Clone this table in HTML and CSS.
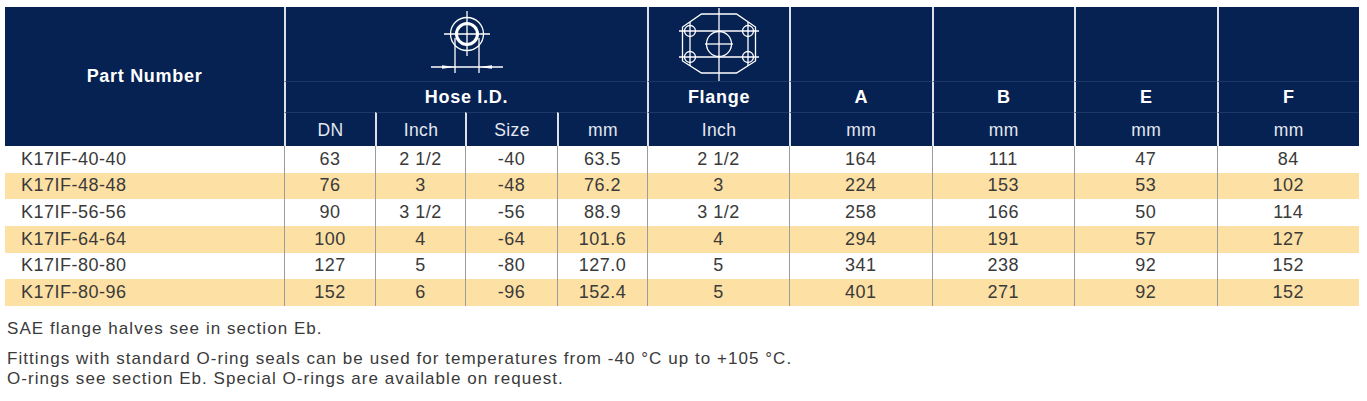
FILE: index.html
```html
<!DOCTYPE html>
<html lang="en">
<head>
<meta charset="utf-8">
<title>K17IF</title>
<link rel="stylesheet" href="styles.css">
</head>
<body>
<table class="spec">
  <colgroup>
    <col class="c-part"><col class="c-dn"><col class="c-inch"><col class="c-size"><col class="c-mm">
    <col class="c-flange"><col class="c-dim"><col class="c-dim"><col class="c-dim"><col class="c-dim">
  </colgroup>
  <thead>
    <tr class="h-icons">
      <th rowspan="3" class="part">Part Number</th>
      <th colspan="4" class="icon">
        <svg class="ico" width="80" height="74" viewBox="0 0 80 74" aria-hidden="true">
          <g fill="none" stroke="#fff" stroke-width="1.3">
            <circle cx="40" cy="27" r="16.5"/>
            <circle cx="40" cy="27" r="10.5" stroke-width="3"/>
            <line x1="17" y1="27" x2="63" y2="27"/>
            <line x1="40" y1="4" x2="40" y2="49"/>
            <line x1="28" y1="31" x2="28" y2="66"/>
            <line x1="52" y1="31" x2="52" y2="66"/>
            <line x1="4" y1="60" x2="76" y2="60"/>
          </g>
          <g fill="#fff">
            <polygon points="15,58.3 28,60 15,61.7"/>
            <polygon points="65,58.3 52,60 65,61.7"/>
          </g>
        </svg>
      </th>
      <th class="icon">
        <svg class="ico" width="80" height="74" viewBox="0 0 80 74" aria-hidden="true">
          <g fill="none" stroke="#fff" stroke-width="1.3">
            <path d="M22.5 7 L57.5 7 L76.5 20 L76.5 54 L57.5 66 L22.5 66 L3.5 54 L3.5 20 Z"/>
            <line x1="0" y1="24" x2="80" y2="24"/>
            <line x1="0" y1="50" x2="80" y2="50"/>
            <line x1="11" y1="15" x2="11" y2="59"/>
            <line x1="69" y1="15" x2="69" y2="59"/>
            <line x1="40" y1="1" x2="40" y2="74"/>
            <line x1="26" y1="37" x2="54" y2="37"/>
            <circle cx="40" cy="37" r="12.5"/>
            <circle cx="11" cy="24" r="5.5"/>
            <circle cx="69" cy="24" r="5.5"/>
            <circle cx="11" cy="50" r="5.5"/>
            <circle cx="69" cy="50" r="5.5"/>
          </g>
        </svg>
      </th>
      <th></th><th></th><th></th><th></th>
    </tr>
    <tr class="h-titles">
      <th colspan="4">Hose I.D.</th>
      <th>Flange</th>
      <th>A</th><th>B</th><th>E</th><th>F</th>
    </tr>
    <tr class="h-units">
      <th>DN</th><th class="sub">Inch</th><th class="sub">Size</th><th class="sub">mm</th>
      <th>Inch</th><th>mm</th><th>mm</th><th>mm</th><th>mm</th>
    </tr>
  </thead>
  <tbody>
    <tr><td>K17IF-40-40</td><td>63</td><td>2 1/2</td><td>-40</td><td>63.5</td><td>2 1/2</td><td>164</td><td>111</td><td>47</td><td>84</td></tr>
    <tr><td>K17IF-48-48</td><td>76</td><td>3</td><td>-48</td><td>76.2</td><td>3</td><td>224</td><td>153</td><td>53</td><td>102</td></tr>
    <tr><td>K17IF-56-56</td><td>90</td><td>3 1/2</td><td>-56</td><td>88.9</td><td>3 1/2</td><td>258</td><td>166</td><td>50</td><td>114</td></tr>
    <tr><td>K17IF-64-64</td><td>100</td><td>4</td><td>-64</td><td>101.6</td><td>4</td><td>294</td><td>191</td><td>57</td><td>127</td></tr>
    <tr><td>K17IF-80-80</td><td>127</td><td>5</td><td>-80</td><td>127.0</td><td>5</td><td>341</td><td>238</td><td>92</td><td>152</td></tr>
    <tr><td>K17IF-80-96</td><td>152</td><td>6</td><td>-96</td><td>152.4</td><td>5</td><td>401</td><td>271</td><td>92</td><td>152</td></tr>
  </tbody>
</table>
<div class="notes">
  <p class="note gap">SAE flange halves see in section Eb.</p>
  <p class="note">Fittings with standard O-ring seals can be used for temperatures from -40 °C up to +105 °C.</p>
  <p class="note">O-rings see section Eb. Special O-rings are available on request.</p>
</div>
</body>
</html>
```
FILE: styles.css
```css
html, body {
  margin: 0;
  padding: 0;
  background: #ffffff;
}

body {
  font-family: "Liberation Sans", Arial, sans-serif;
  color: #3a3a3a;
}

.spec {
  margin: 7px 0 0 5px;
  width: 1354px;
  table-layout: fixed;
  border-collapse: separate;
  border-spacing: 0;
}

.c-part { width: 279px; }
.c-dn { width: 91px; }
.c-inch { width: 90px; }
.c-size { width: 92px; }
.c-mm { width: 90px; }
.c-flange { width: 142px; }
.c-dim { width: 142.5px; }

.spec th {
  background: #062252;
  color: #ffffff;
  padding: 0;
  text-align: center;
  border-left: 2px solid #dde0e7;
  box-sizing: border-box;
}

.spec th.part {
  border-left: none;
  font-size: 18px;
  font-weight: bold;
  letter-spacing: 0.7px;
  vertical-align: middle;
}

.h-icons th {
  height: 74px;
  vertical-align: top;
}

.ico {
  display: block;
  margin: 0 auto;
}

.h-titles th {
  height: 31px;
  border-top: 1px solid #1c3865;
  font-size: 18px;
  font-weight: bold;
  letter-spacing: 0.7px;
  vertical-align: middle;
  padding-top: 1px;
}

.h-units th {
  height: 34px;
  border-top: 1px solid #1c3865;
  font-size: 17.5px;
  font-weight: normal;
  letter-spacing: 0.4px;
  color: #e4e8f0;
  vertical-align: middle;
  padding-top: 2px;
}

.spec td {
  height: 26.67px;
  padding: 0;
  font-size: 18px;
  letter-spacing: 0.5px;
  text-align: center;
  vertical-align: middle;
  border-left: 1px solid #9c9c9c;
  box-sizing: border-box;
}

.spec td:first-child {
  border-left: none;
  text-align: left;
  padding-left: 16px;
}

.spec tbody tr:nth-child(even) td {
  background: #fde0a4;
}

.notes {
  padding: 13px 0 0 7px;
}

.note {
  margin: 0;
  font-size: 17px;
  line-height: 20px;
  letter-spacing: 1.05px;
  color: #3a3a3a;
}

.note.gap {
  margin-bottom: 10px;
}
```
